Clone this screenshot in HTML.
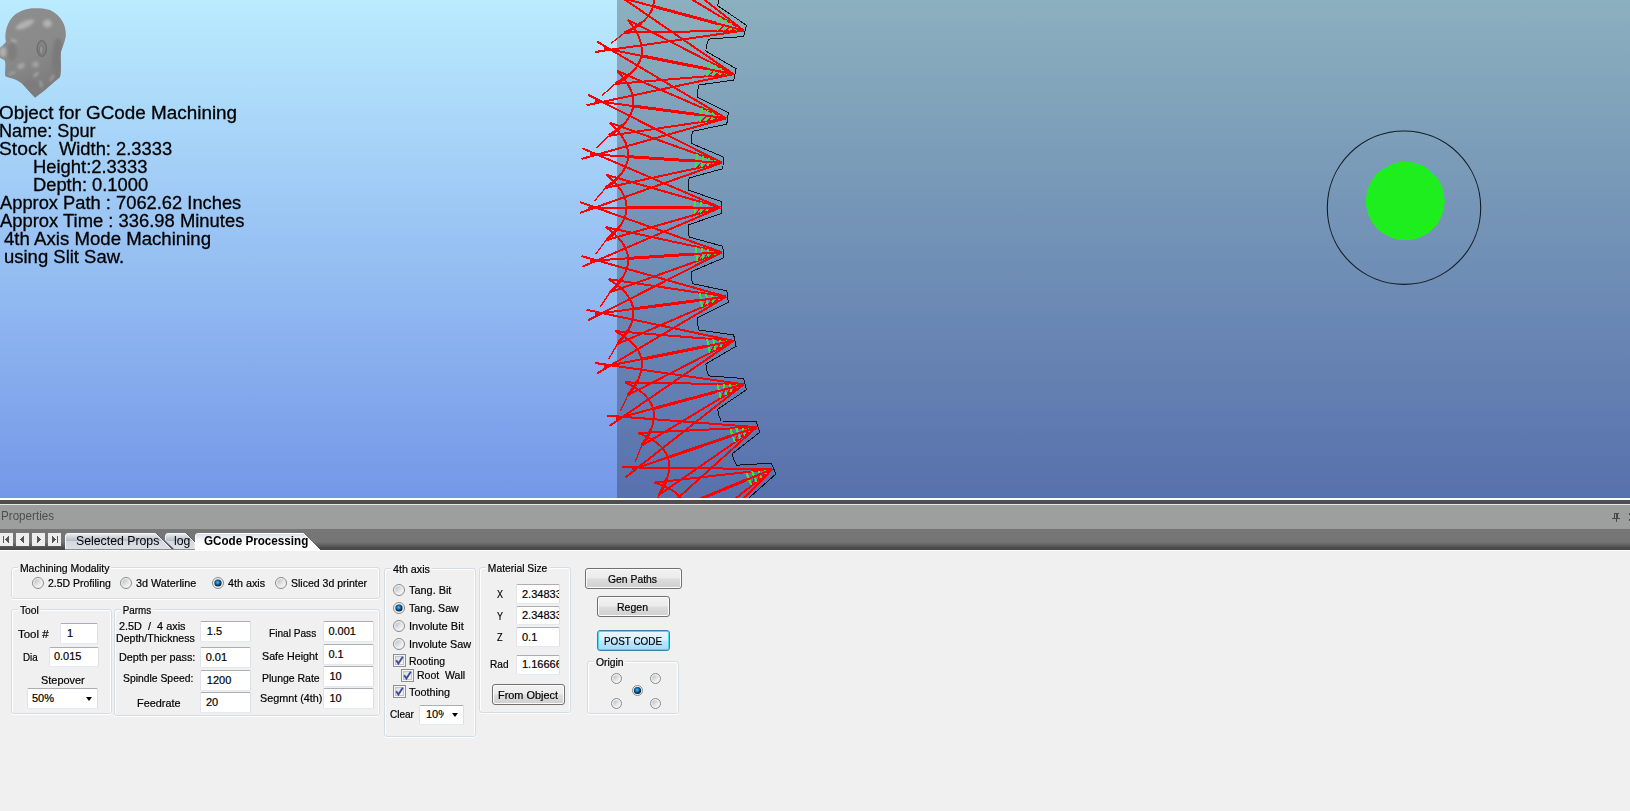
<!DOCTYPE html>
<html><head><meta charset="utf-8"><title>GCode Processing</title>
<style>
*{box-sizing:border-box;margin:0;padding:0}
html,body{width:1630px;height:811px;overflow:hidden;background:#f0f0f0;font-family:"Liberation Sans",sans-serif;}
#view{position:absolute;left:0;top:0;width:1630px;height:498px;overflow:hidden;
 background:linear-gradient(to bottom,#baebfe 0%,#7597e8 100%);}
#stock{position:absolute;left:617px;top:0;width:1013px;height:498px;background:rgba(0,0,0,0.25);}
.il{position:absolute;font-size:18.3px;line-height:20px;height:20px;color:#000;white-space:pre;transform-origin:0 0;-webkit-text-stroke:0.3px #000}
#gear{position:absolute;left:0;top:0}
</style>
<style>
#sep1{position:absolute;left:0;top:498px;width:1630px;height:2px;background:#fff}
#sep2{position:absolute;left:0;top:500px;width:1630px;height:4px;background:#4e4e4e}
#sep3{position:absolute;left:0;top:504px;width:1630px;height:1px;background:#e6e6e6}
#cap{position:absolute;left:0;top:505px;width:1630px;height:24px;background:#9d9f9e}
#cap .t{position:absolute;left:1px;top:509px;margin-top:-505px;font-size:12px;line-height:14px;color:#4e4e4e;transform-origin:0 0}
#tabs{position:absolute;left:0;top:529px;width:1630px;height:21px;background:linear-gradient(to bottom,#767676 0,#757575 13px,#4a4a4a 19px,#484848 21px)}
#tabline{position:absolute;left:0;top:550px;width:1630px;height:1px;background:#fff}
.nav{position:absolute;top:533px;width:13px;height:13px;background:#ededed}
.tab{position:absolute;top:533px;height:17px}
.tabtxt{position:absolute;font-size:12.3px;line-height:14px;color:#000;white-space:pre;transform-origin:0 0}
.grp{position:absolute;border:1px solid #d3dde4;border-radius:3px;box-shadow:inset 1px 1px 0 #fff,inset -1px 0 0 #fff,0 1px 0 #fff}
.lb{position:absolute;-webkit-text-stroke:0.2px #000;font-size:11px;line-height:13px;height:13px;color:#000;white-space:pre;transform-origin:0 50%}
.gl{background:#f0f0f0;padding:0 2px;margin-left:-2px}
.ed{position:absolute;border-radius:1.5px;background:#fff;border:1px solid #e3e9ef;border-top-color:#abadb3;border-left-color:#e2e3ea;border-right-color:#dbdfe6;overflow:hidden}
.ed span{position:absolute;-webkit-text-stroke:0.2px #000;font-size:11px;line-height:13px;white-space:pre;color:#000;transform-origin:0 50%}
.arrow{position:absolute;width:0;height:0;border-left:3.5px solid transparent;border-right:3.5px solid transparent;border-top:4px solid #000}
.rb{position:absolute;border-radius:50%;border:1px solid #8a8b8b;background:#f1f1f1}
.rb::before{content:"";position:absolute;left:1.5px;top:1.5px;right:1.5px;bottom:1.5px;border-radius:50%;background:linear-gradient(135deg,#b9c1ca 0,#dfe3e8 45%,#fbfbfb 100%)}
.rb.on::after{content:"";position:absolute;left:50%;top:50%;width:7px;height:7px;margin:-3.5px 0 0 -3.5px;border-radius:50%;background:radial-gradient(circle at 45% 42%,#48c4fa 0,#1a8cd4 24%,#0d4a80 50%,#08223c 74%,#08223c 100%)}
.cb{position:absolute;width:13px;height:13px;border:1px solid #8e8f8f;background:linear-gradient(135deg,#d6d6d6 0,#f4f4f4 70%,#fafafa 100%);box-shadow:inset 0 0 0 1px #f4f4f4,inset 0 0 0 2px #c4c4c4}
.bt{position:absolute;border:1px solid #707070;border-radius:3px;box-shadow:inset 0 0 0 1px #fcfcfc;background:linear-gradient(to bottom,#f2f2f2 0,#ebebeb 48%,#dddddd 52%,#cfcfcf 100%)}
.bt.def{border-color:#3c7fb1;box-shadow:inset 0 0 0 1px #48d8fa;background:linear-gradient(to bottom,#eaf6fd 0,#d9f0fc 48%,#bee6fd 52%,#a7d9f5 100%)}
.bt span{position:absolute;-webkit-text-stroke:0.2px #000;font-size:11px;line-height:13px;white-space:pre;color:#000;transform-origin:0 50%}
</style>
</head><body>
<div id="view">
<div id="stock"></div>
<svg id="gear" width="1630" height="498" viewBox="0 0 1630 498">
<defs><filter id="hb" x="-50%" y="-50%" width="200%" height="200%"><feGaussianBlur stdDeviation="1.6"/></filter><filter id="hb2" x="-50%" y="-50%" width="200%" height="200%"><feGaussianBlur stdDeviation="1.0"/></filter><filter id="hb3" x="-50%" y="-50%" width="200%" height="200%"><feGaussianBlur stdDeviation="0.5"/></filter><clipPath id="hc"><path d="M35,8.2 C28,8 20,10.5 14.5,15 C9.5,19.5 6.5,26 5.6,33 C5.2,36.5 5.2,39.5 6,41.8 C4.5,44 2,46.5 -1,48.5 L-1,57.5 C1,58.5 3.5,59 4.8,60.8 C5.6,63 5.2,66 5.3,68.5 C5,71.5 4.8,74.5 5.6,76.5 C8.5,77.8 12,78.2 14.5,79.2 C17.5,80.5 20.5,82.5 22.5,84 L35,97.8 L44.5,90.5 L60,77 C60.8,73 60.8,69 60.8,65 C60.6,60 60.4,55 61,51.5 C62.5,47 64.5,42.5 65.6,37.5 C66.3,32 65.2,26.5 62.8,22 C60,16.5 55.5,12.5 50,10 C45.5,8.6 40,8.2 35,8.2 Z"/></clipPath><linearGradient id="hg" x1="0" y1="0" x2="0.3" y2="1"><stop offset="0" stop-color="#8e8e8e"/><stop offset="0.6" stop-color="#898989"/><stop offset="1" stop-color="#7c7c7c"/></linearGradient></defs><path d="M35,8.2 C28,8 20,10.5 14.5,15 C9.5,19.5 6.5,26 5.6,33 C5.2,36.5 5.2,39.5 6,41.8 C4.5,44 2,46.5 -1,48.5 L-1,57.5 C1,58.5 3.5,59 4.8,60.8 C5.6,63 5.2,66 5.3,68.5 C5,71.5 4.8,74.5 5.6,76.5 C8.5,77.8 12,78.2 14.5,79.2 C17.5,80.5 20.5,82.5 22.5,84 L35,97.8 L44.5,90.5 L60,77 C60.8,73 60.8,69 60.8,65 C60.6,60 60.4,55 61,51.5 C62.5,47 64.5,42.5 65.6,37.5 C66.3,32 65.2,26.5 62.8,22 C60,16.5 55.5,12.5 50,10 C45.5,8.6 40,8.2 35,8.2 Z" fill="url(#hg)"/><g clip-path="url(#hc)"><ellipse cx="58" cy="60" rx="6" ry="22" fill="#7a7a7a" filter="url(#hb)"/><ellipse cx="12" cy="52" rx="5" ry="9" fill="#7e7e7e" filter="url(#hb)"/><ellipse cx="30" cy="88" rx="9" ry="8" fill="#7b7b7b" filter="url(#hb)"/><ellipse cx="25" cy="24.5" rx="10" ry="3.2" fill="#b4b4b4" transform="rotate(-24 25 24.5)" filter="url(#hb)"/><ellipse cx="47.5" cy="23.5" rx="4.5" ry="4" fill="#b2b2b2" filter="url(#hb)"/><ellipse cx="3" cy="52" rx="3.5" ry="5" fill="#b0b0b0" filter="url(#hb)"/><ellipse cx="14" cy="40.5" rx="3.5" ry="1.6" fill="#a8a8a8" transform="rotate(25 14 40.5)" filter="url(#hb2)"/><ellipse cx="21" cy="66" rx="4" ry="2.6" fill="#a8a8a8" transform="rotate(-30 21 66)" filter="url(#hb)"/><ellipse cx="35.5" cy="64.5" rx="3.2" ry="3" fill="#a4a4a4" filter="url(#hb)"/><ellipse cx="36" cy="74.5" rx="3.4" ry="1.3" fill="#a8a8a8" transform="rotate(-42 36 74.5)" filter="url(#hb2)"/><ellipse cx="41" cy="84" rx="1.2" ry="4" fill="#a0a0a0" transform="rotate(-12 41 84)" filter="url(#hb2)"/><ellipse cx="52" cy="78" rx="1.2" ry="4" fill="#9c9c9c" transform="rotate(35 52 78)" filter="url(#hb2)"/><ellipse cx="12" cy="73" rx="4" ry="1.5" fill="#9c9c9c" transform="rotate(-20 12 73)" filter="url(#hb2)"/><ellipse cx="41.8" cy="48.5" rx="4.6" ry="7.8" fill="#838383" stroke="#6c6c6c" stroke-width="1.3" filter="url(#hb3)"/><ellipse cx="41.3" cy="49.8" rx="2" ry="4.3" fill="#949494" stroke="#727272" stroke-width="0.9" filter="url(#hb3)"/></g>
<polyline fill="none" stroke="#10141a" stroke-width="1" shape-rendering="crispEdges" points="816.0,-138.7 810.2,-128.6 775.9,-135.2 772.5,-130.0 770.1,-124.4 794.7,-99.5 789.5,-89.1 754.8,-93.3 751.8,-88.0 749.8,-82.2 775.9,-59.0 771.4,-48.2 736.5,-50.2 733.9,-44.7 732.2,-38.8 759.8,-17.3 756.1,-6.3 721.1,-6.0 718.8,-0.3 717.6,5.7 746.5,25.3 743.5,36.5 708.6,39.1 706.7,44.9 705.8,51.0 736.0,68.7 733.7,80.1 699.1,84.9 697.6,90.9 697.1,97.0 728.3,112.7 726.8,124.2 692.6,131.3 691.4,137.3 691.4,143.4 723.6,157.1 722.8,168.7 689.1,178.0 688.4,184.1 688.7,190.2 721.7,201.7 721.7,213.3 688.7,224.8 688.4,230.9 689.1,237.0 722.8,246.3 723.6,257.9 691.4,271.6 691.4,277.7 692.6,283.7 726.8,290.8 728.3,302.3 697.1,318.0 697.6,324.1 699.1,330.1 733.7,334.9 736.0,346.3 705.8,364.0 706.7,370.1 708.6,375.9 743.5,378.5 746.5,389.7 717.6,409.3 718.8,415.3 721.1,421.0 756.1,421.3 759.8,432.3 732.2,453.8 733.9,459.7 736.5,465.2 771.4,463.2 775.9,474.0 749.8,497.2 751.8,503.0 754.8,508.3 789.5,504.1 794.7,514.5 770.1,539.4 772.5,545.0 775.9,550.2 810.2,543.6 816.0,553.7 793.2,580.1 796.0,585.6 799.6,590.5 833.5,581.7 839.9,591.4 818.9,619.3 822.0,624.6 826.0,629.2 859.2,618.2 866.2,627.4 847.1,656.7 850.5,661.7 854.8,666.1"/>
<path d="M812.0,-134.3 L697.6,-200.3 M812.0,-134.3 L722.0,-254.6 M812.0,-134.3 L729.4,-219.7 M812.0,-134.3 L662.8,-152.1 M812.0,-134.3 L696.7,-163.1 M729.4,-219.7 Q748.4,-171.0 696.7,-163.1 M790.9,-94.8 L672.4,-153.3 M790.9,-94.8 L693.2,-209.0 M790.9,-94.8 L702.9,-174.7 M790.9,-94.8 L640.9,-102.8 M790.9,-94.8 L674.0,-116.0 M702.9,-174.7 Q725.1,-127.3 674.0,-116.0 M772.4,-54.1 L650.4,-104.7 M772.4,-54.1 L667.5,-161.6 M772.4,-54.1 L679.4,-128.0 M772.4,-54.1 L622.2,-52.3 M772.4,-54.1 L654.4,-67.6 M679.4,-128.0 Q704.6,-82.2 654.4,-67.6 M756.7,-12.2 L631.6,-54.7 M756.7,-12.2 L645.0,-112.7 M756.7,-12.2 L659.0,-79.9 M756.7,-12.2 L606.9,-0.6 M756.7,-12.2 L638.0,-18.0 M659.0,-79.9 Q687.2,-35.8 638.0,-18.0 M743.7,30.6 L616.1,-3.6 M743.7,30.6 L625.6,-62.3 M743.7,30.6 L641.8,-30.6 M743.7,30.6 L595.0,52.0 M743.7,30.6 L624.9,32.6 M641.8,-30.6 Q672.8,11.6 624.9,32.6 M733.5,74.1 L604.0,48.4 M733.5,74.1 L609.7,-10.8 M733.5,74.1 L627.9,19.8 M733.5,74.1 L586.6,105.2 M733.5,74.1 L615.1,83.9 M627.9,19.8 Q661.5,59.8 615.1,83.9 M726.2,118.3 L595.3,101.0 M726.2,118.3 L597.1,41.6 M726.2,118.3 L617.3,70.9 M726.2,118.3 L581.6,158.9 M726.2,118.3 L608.7,135.8 M617.3,70.9 Q653.5,108.7 608.7,135.8 M721.9,162.8 L590.0,154.2 M721.9,162.8 L588.0,94.7 M721.9,162.8 L610.0,122.7 M721.9,162.8 L580.2,212.8 M721.9,162.8 L605.7,187.9 M610.0,122.7 Q648.6,158.0 605.7,187.9 M720.4,207.5 L588.3,207.5 M720.4,207.5 L582.3,148.3 M720.4,207.5 L606.2,174.8 M720.4,207.5 L582.3,266.7 M720.4,207.5 L606.2,240.2 M606.2,174.8 Q647.0,207.5 606.2,240.2 M721.9,252.2 L590.0,260.8 M721.9,252.2 L580.2,202.2 M721.9,252.2 L605.7,227.1 M721.9,252.2 L588.0,320.3 M721.9,252.2 L610.0,292.3 M605.7,227.1 Q648.6,257.0 610.0,292.3 M726.2,296.7 L595.3,314.0 M726.2,296.7 L581.6,256.1 M726.2,296.7 L608.7,279.2 M726.2,296.7 L597.1,373.4 M726.2,296.7 L617.3,344.1 M608.7,279.2 Q653.5,306.3 617.3,344.1 M733.5,340.9 L604.0,366.6 M733.5,340.9 L586.6,309.8 M733.5,340.9 L615.1,331.1 M733.5,340.9 L609.7,425.8 M733.5,340.9 L627.9,395.2 M615.1,331.1 Q661.5,355.2 627.9,395.2 M743.7,384.4 L616.1,418.6 M743.7,384.4 L595.0,363.0 M743.7,384.4 L624.9,382.4 M743.7,384.4 L625.6,477.3 M743.7,384.4 L641.8,445.6 M624.9,382.4 Q672.8,403.4 641.8,445.6 M756.7,427.2 L631.6,469.7 M756.7,427.2 L606.9,415.6 M756.7,427.2 L638.0,433.0 M756.7,427.2 L645.0,527.7 M756.7,427.2 L659.0,494.9 M638.0,433.0 Q687.2,450.8 659.0,494.9 M772.4,469.1 L650.4,519.7 M772.4,469.1 L622.2,467.3 M772.4,469.1 L654.4,482.6 M772.4,469.1 L667.5,576.6 M772.4,469.1 L679.4,543.0 M654.4,482.6 Q704.6,497.2 679.4,543.0 M790.9,509.8 L672.4,568.3 M790.9,509.8 L640.9,517.8 M790.9,509.8 L674.0,531.0 M790.9,509.8 L693.2,624.0 M790.9,509.8 L702.9,589.7 M674.0,531.0 Q725.1,542.3 702.9,589.7 M812.0,549.3 L697.6,615.3 M812.0,549.3 L662.8,567.1 M812.0,549.3 L696.7,578.1 M812.0,549.3 L722.0,669.6 M812.0,549.3 L729.4,634.7 M696.7,578.1 Q748.4,586.0 729.4,634.7 M835.6,587.3 L725.8,660.7 M835.6,587.3 L687.9,614.8 M835.6,587.3 L722.5,623.6 M835.6,587.3 L753.7,713.2 M835.6,587.3 L758.8,677.9 M722.5,623.6 Q774.6,628.1 758.8,677.9 M861.7,623.6 L756.9,704.1 M861.7,623.6 L716.1,660.7 M861.7,623.6 L751.1,667.2 M861.7,623.6 L788.2,754.7 M861.7,623.6 L790.9,719.1 M751.1,667.2 Q803.4,668.3 790.9,719.1" stroke="#ff0000" stroke-width="2" fill="none" shape-rendering="crispEdges"/>
<path d="M788.3,-148.0 L730.2,-181.5 M714.6,-167.9 Q707.1,-164.7 696.7,-163.1 M766.3,-107.0 L706.2,-136.6 M691.5,-122.0 Q684.2,-118.3 674.0,-116.0 M747.1,-64.6 L685.2,-90.2 M671.5,-74.7 Q664.4,-70.5 654.4,-67.6 M730.7,-21.0 L667.3,-42.6 M654.6,-26.2 Q647.8,-21.6 638.0,-18.0 M717.2,23.5 L652.5,6.1 M640.9,23.3 Q634.5,28.4 624.9,32.6 M706.7,68.8 L640.9,55.7 M630.5,73.6 Q624.4,79.1 615.1,83.9 M699.1,114.7 L632.7,106.0 M623.4,124.5 Q617.7,130.4 608.7,135.8 M694.5,161.0 L627.7,156.6 M619.6,175.8 Q614.3,182.0 605.7,187.9 M693.0,207.5 L626.0,207.5 M619.2,227.1 Q614.3,233.7 606.2,240.2 M694.5,254.0 L627.7,258.4 M622.2,278.4 Q617.7,285.3 610.0,292.3 M699.1,300.3 L632.7,309.0 M628.5,329.4 Q624.5,336.5 617.3,344.1 M706.7,346.2 L640.9,359.3 M638.1,379.8 Q634.6,387.2 627.9,395.2 M717.2,391.5 L652.5,408.9 M651.1,429.6 Q648.0,437.1 641.8,445.6 M730.7,436.0 L667.3,457.6 M667.2,478.3 Q664.7,486.1 659.0,494.9 M747.1,479.6 L685.2,505.2 M686.5,525.9 Q684.5,533.9 679.4,543.0 M766.3,522.0 L706.2,551.6 M708.8,572.2 Q707.3,580.2 702.9,589.7 M788.3,563.0 L730.2,596.5 M734.2,616.9 Q733.2,625.0 729.4,634.7 M812.8,602.5 L757.1,639.7 M762.4,659.8 Q762.0,668.0 758.8,677.9 M839.9,640.3 L786.8,681.1 M793.3,700.8 Q793.4,709.0 790.9,719.1" stroke="#ff0000" stroke-width="3" fill="none" shape-rendering="crispEdges"/>
<path d="M696.7,-163.1 L680.7,-156.4 M674.0,-116.0 L658.4,-108.3 M654.4,-67.6 L639.4,-58.8 M638.0,-18.0 L623.6,-8.2 M624.9,32.6 L611.1,43.3 M615.1,83.9 L602.1,95.5 M608.7,135.8 L596.5,148.2 M605.7,187.9 L594.3,201.1 M606.2,240.2 L595.6,254.1 M610.0,292.3 L600.4,306.8 M617.3,344.1 L608.6,359.2 M627.9,395.2 L620.3,410.9 M641.8,445.6 L635.2,461.7 M659.0,494.9 L653.5,511.4 M679.4,543.0 L675.0,559.9 M702.9,589.7 L699.6,606.8 M729.4,634.7 L727.2,652.0 M758.8,677.9 L757.7,695.3 M790.9,719.1 L791.0,736.5" stroke="#ff0000" stroke-width="1.3" fill="none" shape-rendering="crispEdges"/>
<path d="M793.3,-152.9 L790.6,-148.2 M789.3,-145.9 L786.6,-141.2 M798.0,-149.0 L795.7,-145.2 M794.4,-142.9 L792.2,-139.1 M802.2,-144.5 L800.9,-142.2 M799.6,-140.0 L798.3,-137.7 M806.4,-139.7 L806.1,-139.2 M804.8,-136.9 L804.5,-136.4 M771.0,-112.2 L768.6,-107.3 M767.5,-105.0 L765.1,-100.1 M776.0,-108.6 L774.0,-104.6 M772.8,-102.3 L770.9,-98.3 M780.4,-104.4 L779.3,-102.0 M778.1,-99.7 L777.0,-97.4 M785.0,-99.9 L784.7,-99.3 M783.6,-97.0 L783.3,-96.5 M751.5,-70.1 L749.4,-65.1 M748.4,-62.7 L746.3,-57.6 M756.6,-66.9 L754.9,-62.8 M753.9,-60.4 L752.2,-56.2 M761.4,-62.9 L760.4,-60.5 M759.4,-58.1 L758.4,-55.7 M766.2,-58.7 L766.0,-58.2 M765.0,-55.8 L764.8,-55.2 M734.7,-26.8 L733.0,-21.7 M732.1,-19.2 L730.4,-14.0 M740.1,-23.9 L738.6,-19.7 M737.8,-17.3 L736.4,-13.1 M745.1,-20.3 L744.2,-17.8 M743.4,-15.4 L742.6,-12.9 M750.2,-16.4 L750.0,-15.9 M749.2,-13.4 L749.0,-12.8 M720.8,17.5 L719.4,22.7 M718.7,25.2 L717.3,30.5 M726.4,20.0 L725.2,24.3 M724.5,26.8 L723.4,31.1 M731.6,23.3 L730.9,25.8 M730.2,28.3 L729.6,30.8 M736.9,26.8 L736.8,27.4 M736.1,29.9 L736.0,30.5 M709.9,62.5 L708.8,67.9 M708.3,70.4 L707.2,75.8 M715.6,64.7 L714.7,69.1 M714.2,71.6 L713.3,76.0 M721.0,67.7 L720.5,70.2 M719.9,72.8 L719.4,75.3 M726.6,70.8 L726.4,71.4 M725.9,73.9 L725.8,74.5 M701.9,108.3 L701.1,113.7 M700.8,116.2 L700.1,121.6 M707.7,110.0 L707.1,114.4 M706.7,117.0 L706.2,121.4 M713.3,112.6 L712.9,115.2 M712.6,117.8 L712.3,120.4 M719.1,115.4 L719.0,116.0 M718.6,118.6 L718.6,119.2 M696.9,154.4 L696.5,159.8 M696.3,162.4 L696.0,167.9 M702.8,155.8 L702.5,160.2 M702.3,162.8 L702.1,167.3 M708.6,158.0 L708.4,160.6 M708.2,163.2 L708.0,165.8 M714.5,160.4 L714.5,161.0 M714.3,163.6 L714.3,164.2 M694.9,200.8 L694.9,206.2 M694.9,208.8 L694.9,214.2 M700.9,201.8 L700.9,206.2 M700.9,208.8 L700.9,213.2 M706.8,203.6 L706.8,206.2 M706.8,208.8 L706.8,211.4 M712.9,205.6 L712.9,206.2 M712.9,208.8 L712.9,209.4 M696.0,247.1 L696.3,252.6 M696.5,255.2 L696.9,260.6 M702.1,247.7 L702.3,252.2 M702.5,254.8 L702.8,259.2 M708.0,249.2 L708.2,251.8 M708.4,254.4 L708.6,257.0 M714.3,250.8 L714.3,251.4 M714.5,254.0 L714.5,254.6 M700.1,293.4 L700.8,298.8 M701.1,301.3 L701.9,306.7 M706.2,293.6 L706.7,298.0 M707.1,300.6 L707.7,305.0 M712.3,294.6 L712.6,297.2 M712.9,299.8 L713.3,302.4 M718.6,295.8 L718.6,296.4 M719.0,299.0 L719.1,299.6 M707.2,339.2 L708.3,344.6 M708.8,347.1 L709.9,352.5 M713.3,339.0 L714.2,343.4 M714.7,345.9 L715.6,350.3 M719.4,339.7 L719.9,342.2 M720.5,344.8 L721.0,347.3 M725.8,340.5 L725.9,341.1 M726.4,343.6 L726.6,344.2 M717.3,384.5 L718.7,389.8 M719.4,392.3 L720.8,397.5 M723.4,383.9 L724.5,388.2 M725.2,390.7 L726.4,395.0 M729.6,384.2 L730.2,386.7 M730.9,389.2 L731.6,391.7 M736.0,384.5 L736.1,385.1 M736.8,387.6 L736.9,388.2 M730.4,429.0 L732.1,434.2 M733.0,436.7 L734.7,441.8 M736.4,428.1 L737.8,432.3 M738.6,434.7 L740.1,438.9 M742.6,427.9 L743.4,430.4 M744.2,432.8 L745.1,435.3 M749.0,427.8 L749.2,428.4 M750.0,430.9 L750.2,431.4 M746.3,472.6 L748.4,477.7 M749.4,480.1 L751.5,485.1 M752.2,471.2 L753.9,475.4 M754.9,477.8 L756.6,481.9 M758.4,470.7 L759.4,473.1 M760.4,475.5 L761.4,477.9 M764.8,470.2 L765.0,470.8 M766.0,473.2 L766.2,473.7 M765.1,515.1 L767.5,520.0 M768.6,522.3 L771.0,527.2 M770.9,513.3 L772.8,517.3 M774.0,519.6 L776.0,523.6 M777.0,512.4 L778.1,514.7 M779.3,517.0 L780.4,519.4 M783.3,511.5 L783.6,512.0 M784.7,514.3 L785.0,514.9 M786.6,556.2 L789.3,560.9 M790.6,563.2 L793.3,567.9 M792.2,554.1 L794.4,557.9 M795.7,560.2 L798.0,564.0 M798.3,552.7 L799.6,555.0 M800.9,557.2 L802.2,559.5 M804.5,551.4 L804.8,551.9 M806.1,554.2 L806.4,554.7 M810.7,595.8 L813.7,600.4 M815.1,602.5 L818.2,607.0 M816.2,593.3 L818.7,597.0 M820.1,599.2 L822.6,602.9 M822.1,591.6 L823.6,593.8 M825.0,595.9 L826.5,598.1 M828.3,589.9 L828.7,590.4 M830.1,592.5 L830.4,593.0 M837.3,633.8 L840.6,638.1 M842.2,640.2 L845.6,644.5 M842.7,630.9 L845.4,634.5 M847.0,636.6 L849.7,640.1 M848.5,628.8 L850.1,630.9 M851.7,633.0 L853.3,635.0 M854.6,626.7 L854.9,627.2 M856.5,629.2 L856.9,629.7" stroke="#30f030" stroke-width="2" fill="none" shape-rendering="crispEdges"/>
<path d="M787.3,-140.8 L793.5,-143.5 M792.9,-138.7 L798.4,-140.7 M799.0,-137.3 L802.8,-138.2 M765.8,-99.7 L771.9,-102.9 M771.6,-98.0 L776.9,-100.4 M777.7,-97.0 L781.5,-98.1 M747.1,-57.3 L752.9,-60.8 M753.0,-55.9 L758.1,-58.7 M759.1,-55.4 L762.8,-56.8 M731.2,-13.8 L736.8,-17.7 M737.1,-12.8 L742.1,-15.9 M743.3,-12.7 L746.9,-14.3 M718.1,30.7 L723.5,26.4 M724.2,31.3 L728.9,27.9 M730.3,31.0 L733.8,29.2 M708.0,75.9 L713.1,71.3 M714.1,76.1 L718.6,72.4 M720.2,75.5 L723.6,73.4 M700.9,121.7 L705.7,116.8 M707.0,121.5 L711.2,117.5 M713.1,120.5 L716.3,118.2 M696.8,167.9 L701.2,162.7 M702.9,167.3 L706.8,163.0 M708.8,165.8 L711.9,163.4 M695.7,214.2 L699.8,208.7 M701.7,213.2 L705.4,208.7 M707.6,211.4 L710.5,208.7 M697.7,260.6 L701.4,254.8 M703.6,259.2 L707.0,254.4 M709.4,256.9 L712.1,254.1 M702.7,306.6 L706.0,300.6 M708.5,304.9 L711.5,299.9 M714.1,302.3 L716.6,299.2 M710.7,352.3 L713.6,346.1 M716.3,350.1 L719.1,345.0 M721.8,347.2 L724.1,344.0 M721.6,397.3 L724.1,390.9 M727.1,394.8 L729.5,389.5 M732.3,391.5 L734.4,388.2 M735.5,441.5 L737.6,435.0 M740.8,438.7 L742.9,433.2 M745.8,435.0 L747.7,431.6 M752.2,484.8 L753.9,478.1 M757.4,481.6 L759.0,476.0 M762.1,477.6 L763.8,474.0 M771.8,526.8 L773.0,520.1 M776.7,523.3 L778.0,517.6 M781.2,519.0 L782.6,515.3 M794.0,567.5 L794.8,560.7 M798.7,563.6 L799.6,557.9 M802.9,559.1 L804.0,555.3 M818.8,606.6 L819.2,599.8 M823.3,602.4 L823.8,596.6 M827.1,597.6 L828.0,593.8 M846.2,644.0 L846.1,637.2 M850.3,639.6 L850.5,633.7 M853.9,634.5 L854.5,630.6" stroke="#ff0000" stroke-width="1.2" fill="none" shape-rendering="crispEdges"/>
<circle cx="1404" cy="207.7" r="76.7" fill="none" stroke="#141a20" stroke-width="1.1"/>
<circle cx="1405.3" cy="201" r="39.4" fill="#1eee1e" shape-rendering="crispEdges"/>
</svg>
<span class="il" style="left:-1.5px;top:103.4px;transform:scaleX(1.0321)">Object for GCode Machining</span>
<span class="il" style="left:-1.5px;top:121.4px;transform:scaleX(0.9904)">Name: Spur</span>
<span class="il" style="left:-0.6px;top:139.4px;transform:scaleX(1.0531)">Stock</span>
<span class="il" style="left:58.6px;top:139.4px;transform:scaleX(1.0025)">Width: 2.3333</span>
<span class="il" style="left:33.4px;top:157.4px;transform:scaleX(1.0056)">Height:2.3333</span>
<span class="il" style="left:33.4px;top:175.4px;transform:scaleX(1.0020)">Depth: 0.1000</span>
<span class="il" style="left:0.0px;top:193.4px;transform:scaleX(1.0016)">Approx Path : 7062.62 Inches</span>
<span class="il" style="left:0.0px;top:211.4px;transform:scaleX(1.0061)">Approx Time : 336.98 Minutes</span>
<span class="il" style="left:4.3px;top:229.4px;transform:scaleX(1.0189)">4th Axis Mode Machining</span>
<span class="il" style="left:4.0px;top:247.4px;transform:scaleX(1.0108)">using Slit Saw.</span>
</div>
<svg width="0" height="0" style="position:absolute"><defs><linearGradient id="rbg" x1="0" y1="0" x2="1" y2="1"><stop offset="0" stop-color="#b4bcc6"/><stop offset="0.5" stop-color="#dde1e6"/><stop offset="1" stop-color="#fcfcfc"/></linearGradient><radialGradient id="rbd" cx="0.45" cy="0.42" r="0.6"><stop offset="0" stop-color="#4cc6fa"/><stop offset="0.3" stop-color="#1a8cd4"/><stop offset="0.6" stop-color="#0d4a80"/><stop offset="0.85" stop-color="#08223c"/><stop offset="1" stop-color="#08223c"/></radialGradient></defs></svg>
<div id="sep1"></div><div id="sep2"></div><div id="sep3"></div>
<div id="cap"><span class="t" style="transform:scaleX(0.9690)">Properties</span>
<svg style="position:absolute;left:1611px;top:7px" width="19" height="11" viewBox="0 0 19 11"><path d="M2.5 1 H7.5 M3.5 1 V6 M6.5 1 V6 M5.5 1 V6 M1 6.5 H9 M5 7 V10" stroke="#4a4a4a" stroke-width="1" fill="none" shape-rendering="crispEdges"/><rect x="18" y="1" width="1" height="2" fill="#4a4a4a"/><rect x="18" y="7" width="1" height="2" fill="#4a4a4a"/></svg>
</div>
<div id="tabs"></div><div id="tabline"></div>
<div class="nav" style="left:0px"></div>
<div class="nav" style="left:16px"></div>
<div class="nav" style="left:32px"></div>
<div class="nav" style="left:48px"></div>
<svg style="position:absolute;left:0;top:533px" width="62" height="13" viewBox="0 0 62 13" shape-rendering="crispEdges">
<rect x="3" y="3" width="1" height="7" fill="#555"/><path d="M9 3 L5 6.5 L9 10Z" fill="#555"/>
<path d="M24 3 L20 6.5 L24 10Z" fill="#555"/>
<path d="M37 3 L41 6.5 L37 10Z" fill="#555"/>
<path d="M52 3 L56 6.5 L52 10Z" fill="#555"/><rect x="57" y="3" width="1" height="7" fill="#555"/>
</svg>
<svg style="position:absolute;left:60px;top:531px" width="270" height="20" viewBox="60 531 270 20">
<defs>
<linearGradient id="tg" x1="0" y1="0" x2="0" y2="1"><stop offset="0" stop-color="#eceef2"/><stop offset="0.45" stop-color="#b4bcc8"/><stop offset="0.5" stop-color="#d4d8e0"/><stop offset="1" stop-color="#dcdfe6"/></linearGradient>
<linearGradient id="ta" x1="0" y1="0" x2="0" y2="1"><stop offset="0" stop-color="#d9dfea"/><stop offset="0.35" stop-color="#f4f6fa"/><stop offset="0.6" stop-color="#ffffff"/><stop offset="1" stop-color="#ffffff"/></linearGradient>
</defs>
<path d="M65.5 549.5 V536 Q65.5 533.5 68 533.5 H155.5 L171.5 549.5 Z" fill="url(#tg)" stroke="#f4f4f4" stroke-width="1"/>
<path d="M65 549.5 H172" stroke="#8a8a8a" stroke-width="1"/>
<path d="M156.5 533.5 L172.2 549.2" stroke="#5e5e5e" stroke-width="1" fill="none"/>
<path d="M165.5 540 V536 Q165.5 533.5 168 533.5 H185.5 L195 543 V549.5 H175 Z" fill="url(#tg)" stroke="#f4f4f4" stroke-width="1"/>
<path d="M172 549.5 H195" stroke="#8a8a8a" stroke-width="1"/>
<path d="M186.5 533.5 L195 542" stroke="#5e5e5e" stroke-width="1" fill="none"/>
<path d="M195.5 551 V536 Q195.5 533.5 198 533.5 H303.5 L321 551 Z" fill="url(#ta)" stroke="#ffffff" stroke-width="1"/>
</svg>
<span class="tabtxt" style="left:76.2px;top:533.6px;transform:scaleX(0.9986)">Selected Props</span>
<span class="tabtxt" style="left:173.9px;top:533.6px;transform:scaleX(0.9930)">log</span>
<span class="tabtxt" style="left:204.2px;top:533.6px;font-weight:bold;transform:scaleX(0.9478)">GCode Processing</span>
<div class="grp" style="left:11px;top:567px;width:369px;height:32px"></div><span class="lb" style="left:19.5px;top:561.7px;background:#f0f0f0;padding:0 2px;margin-left:-2px;transform:scaleX(0.9505)">Machining Modality</span>
<svg style="position:absolute;left:32px;top:577px" width="12" height="12" viewBox="0 0 12 12"><circle cx="6.0" cy="6.0" r="5.5" fill="#f1f1f1" stroke="#8a8b8b" stroke-width="1"/><circle cx="6.0" cy="6.0" r="3.8" fill="url(#rbg)"/></svg>
<span class="lb" style="left:48.2px;top:576.5px;transform:scaleX(0.9510);">2.5D Profiling</span>
<svg style="position:absolute;left:120px;top:577px" width="12" height="12" viewBox="0 0 12 12"><circle cx="6.0" cy="6.0" r="5.5" fill="#f1f1f1" stroke="#8a8b8b" stroke-width="1"/><circle cx="6.0" cy="6.0" r="3.8" fill="url(#rbg)"/></svg>
<span class="lb" style="left:135.8px;top:576.5px;transform:scaleX(0.9813);">3d Waterline</span>
<svg style="position:absolute;left:212px;top:577px" width="12" height="12" viewBox="0 0 12 12"><circle cx="6.0" cy="6.0" r="5.5" fill="#f1f1f1" stroke="#8a8b8b" stroke-width="1"/><circle cx="6.0" cy="6.0" r="3.8" fill="url(#rbg)"/><circle cx="6.0" cy="6.0" r="3.6" fill="url(#rbd)"/></svg>
<span class="lb" style="left:228.0px;top:576.5px;transform:scaleX(0.9760);">4th axis</span>
<svg style="position:absolute;left:275px;top:577px" width="12" height="12" viewBox="0 0 12 12"><circle cx="6.0" cy="6.0" r="5.5" fill="#f1f1f1" stroke="#8a8b8b" stroke-width="1"/><circle cx="6.0" cy="6.0" r="3.8" fill="url(#rbg)"/></svg>
<span class="lb" style="left:290.6px;top:576.5px;transform:scaleX(0.9574);">Sliced 3d printer</span>
<div class="grp" style="left:11px;top:609px;width:101px;height:105px"></div><span class="lb" style="left:20.0px;top:603.7px;background:#f0f0f0;padding:0 2px;margin-left:-2px;transform:scaleX(0.9415)">Tool</span>
<span class="lb" style="left:18.0px;top:627.5px;transform:scaleX(1.0425);">Tool #</span>
<div class="ed" style="left:60px;top:623px;width:38px;height:21px"><span style="left:6.0px;top:2.8px;transform:scaleX(1.0)">1</span></div>
<span class="lb" style="left:22.6px;top:650.8px;transform:scaleX(0.8906);">Dia</span>
<div class="ed" style="left:49px;top:647px;width:50px;height:20px"><span style="left:3.9px;top:2.3px;transform:scaleX(1.0)">0.015</span></div>
<span class="lb" style="left:41.3px;top:673.5px;transform:scaleX(0.9925);">Stepover</span>
<div class="ed" style="left:27px;top:688px;width:71px;height:21px"><span style="left:3.9px;top:3.0px;transform:scaleX(1.0)">50%</span></div>
<div class="arrow" style="left:86px;top:697px"></div>
<div class="grp" style="left:114px;top:609px;width:266px;height:107px"></div><span class="lb" style="left:122.6px;top:603.7px;background:#f0f0f0;padding:0 2px;margin-left:-2px;transform:scaleX(0.8936)">Parms</span>
<span class="lb" style="left:119.0px;top:619.8px;transform:scaleX(0.9888);">2.5D  /  4 axis</span>
<span class="lb" style="left:115.7px;top:631.7px;transform:scaleX(0.9618);">Depth/Thickness</span>
<span class="lb" style="left:118.7px;top:650.8px;transform:scaleX(0.9825);">Depth per pass:</span>
<span class="lb" style="left:122.6px;top:671.5px;transform:scaleX(0.9421);">Spindle Speed:</span>
<span class="lb" style="left:136.7px;top:696.5px;transform:scaleX(0.9903);">Feedrate</span>
<div class="ed" style="left:200px;top:621px;width:51px;height:21px"><span style="left:5.8px;top:3.0px;transform:scaleX(1.0)">1.5</span></div>
<div class="ed" style="left:200px;top:647px;width:51px;height:21px"><span style="left:4.7px;top:3.0px;transform:scaleX(1.0)">0.01</span></div>
<div class="ed" style="left:200px;top:670px;width:51px;height:21px"><span style="left:5.8px;top:3.0px;transform:scaleX(1.0)">1200</span></div>
<div class="ed" style="left:200px;top:692px;width:51px;height:21px"><span style="left:5.0px;top:3.0px;transform:scaleX(1.0)">20</span></div>
<span class="lb" style="left:269.2px;top:626.5px;transform:scaleX(0.9191);">Final Pass</span>
<span class="lb" style="left:262.3px;top:649.5px;transform:scaleX(0.9742);">Safe Height</span>
<span class="lb" style="left:262.3px;top:671.5px;transform:scaleX(0.9530);">Plunge Rate</span>
<span class="lb" style="left:259.6px;top:691.7px;transform:scaleX(0.9814);">Segmnt (4th)</span>
<div class="ed" style="left:323px;top:621px;width:51px;height:21px"><span style="left:4.4px;top:3.0px;transform:scaleX(1.0)">0.001</span></div>
<div class="ed" style="left:323px;top:644px;width:51px;height:21px"><span style="left:4.4px;top:3.0px;transform:scaleX(1.0)">0.1</span></div>
<div class="ed" style="left:323px;top:666px;width:51px;height:21px"><span style="left:5.4px;top:3.2px;transform:scaleX(1.0)">10</span></div>
<div class="ed" style="left:323px;top:688px;width:51px;height:21px"><span style="left:5.4px;top:3.3px;transform:scaleX(1.0)">10</span></div>
<div class="grp" style="left:384px;top:568px;width:92px;height:169px"></div><span class="lb" style="left:393.0px;top:562.7px;background:#f0f0f0;padding:0 2px;margin-left:-2px;transform:scaleX(0.9760)">4th axis</span>
<svg style="position:absolute;left:393px;top:584px" width="12" height="12" viewBox="0 0 12 12"><circle cx="6.0" cy="6.0" r="5.5" fill="#f1f1f1" stroke="#8a8b8b" stroke-width="1"/><circle cx="6.0" cy="6.0" r="3.8" fill="url(#rbg)"/></svg>
<span class="lb" style="left:409.0px;top:583.5px;transform:scaleX(0.9906);">Tang. Bit</span>
<svg style="position:absolute;left:393px;top:602px" width="12" height="12" viewBox="0 0 12 12"><circle cx="6.0" cy="6.0" r="5.5" fill="#f1f1f1" stroke="#8a8b8b" stroke-width="1"/><circle cx="6.0" cy="6.0" r="3.8" fill="url(#rbg)"/><circle cx="6.0" cy="6.0" r="3.6" fill="url(#rbd)"/></svg>
<span class="lb" style="left:409.0px;top:601.7px;transform:scaleX(0.9695);">Tang. Saw</span>
<svg style="position:absolute;left:393px;top:620px" width="12" height="12" viewBox="0 0 12 12"><circle cx="6.0" cy="6.0" r="5.5" fill="#f1f1f1" stroke="#8a8b8b" stroke-width="1"/><circle cx="6.0" cy="6.0" r="3.8" fill="url(#rbg)"/></svg>
<span class="lb" style="left:409.0px;top:619.5px;transform:scaleX(1.0051);">Involute Bit</span>
<svg style="position:absolute;left:393px;top:638px" width="12" height="12" viewBox="0 0 12 12"><circle cx="6.0" cy="6.0" r="5.5" fill="#f1f1f1" stroke="#8a8b8b" stroke-width="1"/><circle cx="6.0" cy="6.0" r="3.8" fill="url(#rbg)"/></svg>
<span class="lb" style="left:409.0px;top:637.5px;transform:scaleX(0.9844);">Involute Saw</span>
<div class="cb" style="left:393px;top:654px"></div><svg style="position:absolute;left:393px;top:654px" width="13" height="13" viewBox="0 0 13 13"><path d="M3.2 6.2 L5.4 9.6 L9.8 2.8" stroke="#3a4c9e" stroke-width="1.9" fill="none"/></svg>
<span class="lb" style="left:409.0px;top:654.5px;transform:scaleX(0.9495);">Rooting</span>
<div class="cb" style="left:401px;top:669px"></div><svg style="position:absolute;left:401px;top:669px" width="13" height="13" viewBox="0 0 13 13"><path d="M3.2 6.2 L5.4 9.6 L9.8 2.8" stroke="#3a4c9e" stroke-width="1.9" fill="none"/></svg>
<span class="lb" style="left:416.9px;top:669.3px;transform:scaleX(0.9557);">Root  Wall</span>
<div class="cb" style="left:393px;top:685px"></div><svg style="position:absolute;left:393px;top:685px" width="13" height="13" viewBox="0 0 13 13"><path d="M3.2 6.2 L5.4 9.6 L9.8 2.8" stroke="#3a4c9e" stroke-width="1.9" fill="none"/></svg>
<span class="lb" style="left:409.0px;top:685.8px;transform:scaleX(0.9858);">Toothing</span>
<span class="lb" style="left:389.7px;top:707.5px;transform:scaleX(0.9092);">Clear</span>
<div class="ed" style="left:419px;top:705px;width:45px;height:20px"><span style="left:6.0px;top:2.3px;transform:scaleX(1.0)">10%</span></div>
<div style="position:absolute;left:444px;top:706px;width:19px;height:17px;background:#fff"></div>
<div class="arrow" style="left:452px;top:713px"></div>
<div class="grp" style="left:479px;top:567px;width:92px;height:146px"></div><span class="lb" style="left:487.6px;top:561.7px;background:#f0f0f0;padding:0 2px;margin-left:-2px;transform:scaleX(0.9343)">Material Size</span>
<span class="lb" style="left:496.6px;top:587.9px;transform:scaleX(0.8177);">X</span>
<div class="ed" style="left:516px;top:584px;width:44px;height:20px"><span style="left:5.0px;top:2.5px;transform:scaleX(1.0)">2.34833</span></div>
<span class="lb" style="left:496.6px;top:609.5px;transform:scaleX(0.8177);">Y</span>
<div class="ed" style="left:516px;top:606px;width:44px;height:19px"><span style="left:5.0px;top:1.5px;transform:scaleX(1.0)">2.34833</span></div>
<span class="lb" style="left:496.8px;top:631.0px;transform:scaleX(0.8334);">Z</span>
<div class="ed" style="left:516px;top:627px;width:44px;height:20px"><span style="left:5.0px;top:2.5px;transform:scaleX(1.0)">0.1</span></div>
<span class="lb" style="left:490.3px;top:658.2px;transform:scaleX(0.9168);">Rad</span>
<div class="ed" style="left:516px;top:655px;width:44px;height:20px"><span style="left:5.0px;top:2.4px;transform:scaleX(1.0)">1.16666</span></div>
<div class="bt" style="left:492px;top:684px;width:73px;height:21px"><span style="left:4.8px;top:4.0px;transform:scaleX(0.9915)">From Object</span></div>
<div class="bt" style="left:585px;top:568px;width:97px;height:21px"><span style="left:22.3px;top:4.0px;transform:scaleX(0.9427)">Gen Paths</span></div>
<div class="bt" style="left:597px;top:596px;width:73px;height:21px"><span style="left:19.3px;top:4.0px;transform:scaleX(0.9563)">Regen</span></div>
<div class="bt def" style="left:597px;top:630px;width:73px;height:21px"><span style="left:5.8px;top:4.0px;transform:scaleX(0.8980)">POST CODE</span></div>
<div class="grp" style="left:587px;top:661px;width:92px;height:53px"></div><span class="lb" style="left:595.6px;top:655.7px;background:#f0f0f0;padding:0 2px;margin-left:-2px;transform:scaleX(0.9440)">Origin</span>
<svg style="position:absolute;left:611px;top:673px" width="11" height="11" viewBox="0 0 11 11"><circle cx="5.5" cy="5.5" r="5.0" fill="#f1f1f1" stroke="#8a8b8b" stroke-width="1"/><circle cx="5.5" cy="5.5" r="3.3" fill="url(#rbg)"/></svg>
<svg style="position:absolute;left:650px;top:673px" width="11" height="11" viewBox="0 0 11 11"><circle cx="5.5" cy="5.5" r="5.0" fill="#f1f1f1" stroke="#8a8b8b" stroke-width="1"/><circle cx="5.5" cy="5.5" r="3.3" fill="url(#rbg)"/></svg>
<svg style="position:absolute;left:632px;top:685px" width="11" height="11" viewBox="0 0 11 11"><circle cx="5.5" cy="5.5" r="5.0" fill="#f1f1f1" stroke="#8a8b8b" stroke-width="1"/><circle cx="5.5" cy="5.5" r="3.3" fill="url(#rbg)"/><circle cx="5.5" cy="5.5" r="3.6" fill="url(#rbd)"/></svg>
<svg style="position:absolute;left:611px;top:698px" width="11" height="11" viewBox="0 0 11 11"><circle cx="5.5" cy="5.5" r="5.0" fill="#f1f1f1" stroke="#8a8b8b" stroke-width="1"/><circle cx="5.5" cy="5.5" r="3.3" fill="url(#rbg)"/></svg>
<svg style="position:absolute;left:650px;top:698px" width="11" height="11" viewBox="0 0 11 11"><circle cx="5.5" cy="5.5" r="5.0" fill="#f1f1f1" stroke="#8a8b8b" stroke-width="1"/><circle cx="5.5" cy="5.5" r="3.3" fill="url(#rbg)"/></svg>
</body></html>
